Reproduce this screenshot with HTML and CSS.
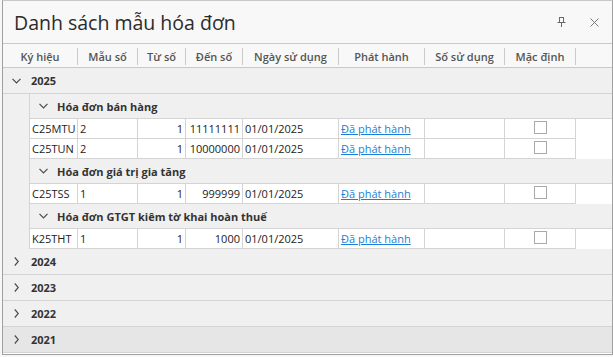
FILE: index.html
```html
<!DOCTYPE html>
<html lang="vi">
<head>
<meta charset="utf-8">
<title>Danh sách mẫu hóa đơn</title>
<link rel="stylesheet" href="styles.css">
</head>
<body>
<div class="window">
  <div class="titlebar">
    <div class="title">Danh sách mẫu hóa đơn</div>
    <div class="tools">
      <svg class="pin" width="9" height="10" viewBox="0 0 9 10"><path d="M2 0.5H7M2.5 0.5V5M6.5 0.5V5M0.5 5.5H8.5M4.5 5.5V10" fill="none" stroke="#6a6a6a" stroke-width="1"/></svg>
      <svg class="close" width="9" height="9" viewBox="0 0 9 9"><path d="M0.5 0.5L8.5 8.5M8.5 0.5L0.5 8.5" fill="none" stroke="#7a7a7a" stroke-width="1"/></svg>
    </div>
  </div>
  <div class="grid">
    <div class="head">
      <div class="hc w-first">Ký hiệu</div>
      <div class="hc w-ms">Mẫu số</div>
      <div class="hc w-ts">Từ số</div>
      <div class="hc w-ds">Đến số</div>
      <div class="hc w-ng">Ngày sử dụng</div>
      <div class="hc w-ph">Phát hành</div>
      <div class="hc w-ss">Số sử dụng</div>
      <div class="hc w-md">Mặc định</div>
    </div>

    <div class="year">
      <div class="year-row">
        <span class="chev"><svg width="9" height="6" viewBox="0 0 9 6"><path d="M0.5 0.8L4.5 4.8L8.5 0.8" fill="none" stroke="#4a4a4a" stroke-width="1.2"/></svg></span>
        <span class="ylabel">2025</span>
      </div>
      <div class="year-body">
        <div class="indent"></div>
        <div class="subs">
          <div class="sub">
            <div class="sub-row">
              <span class="chev"><svg width="9" height="6" viewBox="0 0 9 6"><path d="M0.5 0.8L4.5 4.8L8.5 0.8" fill="none" stroke="#4a4a4a" stroke-width="1.2"/></svg></span>
              <span class="slabel">Hóa đơn bán hàng</span>
            </div>
            <div class="drow">
              <div class="cell w-kh">C25MTU</div>
              <div class="cell w-ms">2</div>
              <div class="cell w-ts num">1</div>
              <div class="cell w-ds num">11111111</div>
              <div class="cell w-ng">01/01/2025</div>
              <div class="cell w-ph"><a class="link" href="#">Đã phát hành</a></div>
              <div class="cell w-ss"></div>
              <div class="cell w-md"><div class="chk"></div></div>
              <div class="fill"></div>
            </div>
            <div class="drow">
              <div class="cell w-kh">C25TUN</div>
              <div class="cell w-ms">2</div>
              <div class="cell w-ts num">1</div>
              <div class="cell w-ds num">10000000</div>
              <div class="cell w-ng">01/01/2025</div>
              <div class="cell w-ph"><a class="link" href="#">Đã phát hành</a></div>
              <div class="cell w-ss"></div>
              <div class="cell w-md"><div class="chk"></div></div>
              <div class="fill"></div>
            </div>
          </div>
          <div class="sub">
            <div class="sub-row">
              <span class="chev"><svg width="9" height="6" viewBox="0 0 9 6"><path d="M0.5 0.8L4.5 4.8L8.5 0.8" fill="none" stroke="#4a4a4a" stroke-width="1.2"/></svg></span>
              <span class="slabel">Hóa đơn giá trị gia tăng</span>
            </div>
            <div class="drow">
              <div class="cell w-kh">C25TSS</div>
              <div class="cell w-ms">1</div>
              <div class="cell w-ts num">1</div>
              <div class="cell w-ds num">999999</div>
              <div class="cell w-ng">01/01/2025</div>
              <div class="cell w-ph"><a class="link" href="#">Đã phát hành</a></div>
              <div class="cell w-ss"></div>
              <div class="cell w-md"><div class="chk"></div></div>
              <div class="fill"></div>
            </div>
          </div>
          <div class="sub">
            <div class="sub-row">
              <span class="chev"><svg width="9" height="6" viewBox="0 0 9 6"><path d="M0.5 0.8L4.5 4.8L8.5 0.8" fill="none" stroke="#4a4a4a" stroke-width="1.2"/></svg></span>
              <span class="slabel">Hóa đơn GTGT kiêm tờ khai hoàn thuế</span>
            </div>
            <div class="drow">
              <div class="cell w-kh">K25THT</div>
              <div class="cell w-ms">1</div>
              <div class="cell w-ts num">1</div>
              <div class="cell w-ds num">1000</div>
              <div class="cell w-ng">01/01/2025</div>
              <div class="cell w-ph"><a class="link" href="#">Đã phát hành</a></div>
              <div class="cell w-ss"></div>
              <div class="cell w-md"><div class="chk"></div></div>
              <div class="fill"></div>
            </div>
          </div>
        </div>
      </div>
    </div>

    <div class="year">
      <div class="year-row">
        <span class="chev"><svg width="5" height="9" viewBox="0 0 5 9"><path d="M0.8 0.5L4.3 4.5L0.8 8.5" fill="none" stroke="#4a4a4a" stroke-width="1.2"/></svg></span>
        <span class="ylabel">2024</span>
      </div>
    </div>
    <div class="year">
      <div class="year-row">
        <span class="chev"><svg width="5" height="9" viewBox="0 0 5 9"><path d="M0.8 0.5L4.3 4.5L0.8 8.5" fill="none" stroke="#4a4a4a" stroke-width="1.2"/></svg></span>
        <span class="ylabel">2023</span>
      </div>
    </div>
    <div class="year">
      <div class="year-row">
        <span class="chev"><svg width="5" height="9" viewBox="0 0 5 9"><path d="M0.8 0.5L4.3 4.5L0.8 8.5" fill="none" stroke="#4a4a4a" stroke-width="1.2"/></svg></span>
        <span class="ylabel">2022</span>
      </div>
    </div>
    <div class="year">
      <div class="year-row hover">
        <span class="chev"><svg width="5" height="9" viewBox="0 0 5 9"><path d="M0.8 0.5L4.3 4.5L0.8 8.5" fill="none" stroke="#4a4a4a" stroke-width="1.2"/></svg></span>
        <span class="ylabel">2021</span>
      </div>
    </div>
  </div>
</div>
</body>
</html>
```

FILE: styles.css
```css
html, body {
  margin: 0;
  padding: 0;
  background: #f7f7f7;
}
body {
  padding-left: 2px;
  font-family: "Open Sans", "Noto Sans", "DejaVu Sans", sans-serif;
  font-size: 11px;
  color: #222;
}
.window {
  width: 611px;
  height: 355px;
  box-sizing: border-box;
  border: 1px solid #a0a0a0;
  border-top-color: #c8c8c8;
  background: #f8f8f8;
  display: flex;
  flex-direction: column;
  overflow: hidden;
}
.titlebar {
  height: 42px;
  flex: none;
  display: flex;
  align-items: center;
  justify-content: space-between;
  padding: 0 13px 0 11px;
}
.title {
  font-size: 19.5px;
  color: #2b2b2b;
  line-height: 24px;
  padding-top: 1px;
}
.tools {
  display: flex;
  align-items: center;
  gap: 24px;
}
.tools svg { display: block; }
.grid {
  flex: 1;
  background: #fff;
  display: flex;
  flex-direction: column;
}
.head {
  flex: none;
  height: 23px;
  border-top: 1px solid #c9c9c9;
  border-bottom: 1px solid #c9c9c9;
  background: #f8f8f8;
  display: flex;
  align-items: center;
}
.hc {
  box-sizing: border-box;
  height: 17px;
  line-height: 17px;
  border-right: 1px solid #c9c9c9;
  text-align: center;
  font-weight: 600;
  color: #555;
  white-space: nowrap;
  overflow: hidden;
  margin-top: 1px;
}
.w-first { width: 75px; }
.w-kh { width: 48px; }
.w-ms { width: 60px; }
.w-ts { width: 48px; }
.w-ds { width: 57px; }
.w-ng { width: 96px; }
.w-ph { width: 86px; }
.w-ss { width: 80px; }
.w-md { width: 71px; }

.year-row {
  height: 25px;
  border-bottom: 1px solid #d4d4d4;
  background: #f0f0f0;
  display: flex;
  align-items: center;
  padding-left: 9px;
}
.year-row.hover { background: #e6e6e6; }
.chev {
  width: 9px;
  height: 10px;
  display: flex;
  align-items: center;
  justify-content: center;
  flex: none;
}
.chev svg { display: block; }
.year-row .chev { margin-right: 10px; }
.ylabel, .slabel {
  font-weight: 700;
  color: #333;
}
.year-body { display: flex; }
.indent {
  width: 27px;
  flex: none;
  box-sizing: border-box;
  border-right: 1px solid #d4d4d4;
  background: #f0f0f0;
}
.subs { flex: 1; }
.sub-row {
  height: 24px;
  border-bottom: 1px solid #d4d4d4;
  background: #f0f0f0;
  display: flex;
  align-items: center;
  padding-left: 9px;
}
.sub-row .chev { margin-right: 9px; }
.drow {
  display: flex;
  height: 20px;
  background: #fff;
}
.cell {
  box-sizing: border-box;
  height: 20px;
  border-right: 1px solid #d4d4d4;
  border-bottom: 1px solid #d4d4d4;
  padding: 0 2px;
  line-height: 19px;
  white-space: nowrap;
  overflow: hidden;
  flex: none;
}
.num { text-align: right; }
.fill { flex: 1; }
.link {
  color: #1a7fd6;
  text-decoration: underline;
}
.chk {
  width: 13px;
  height: 13px;
  box-sizing: border-box;
  border: 1px solid #a9a9a9;
  background: #fff;
  margin: 2px auto 0;
}
```
